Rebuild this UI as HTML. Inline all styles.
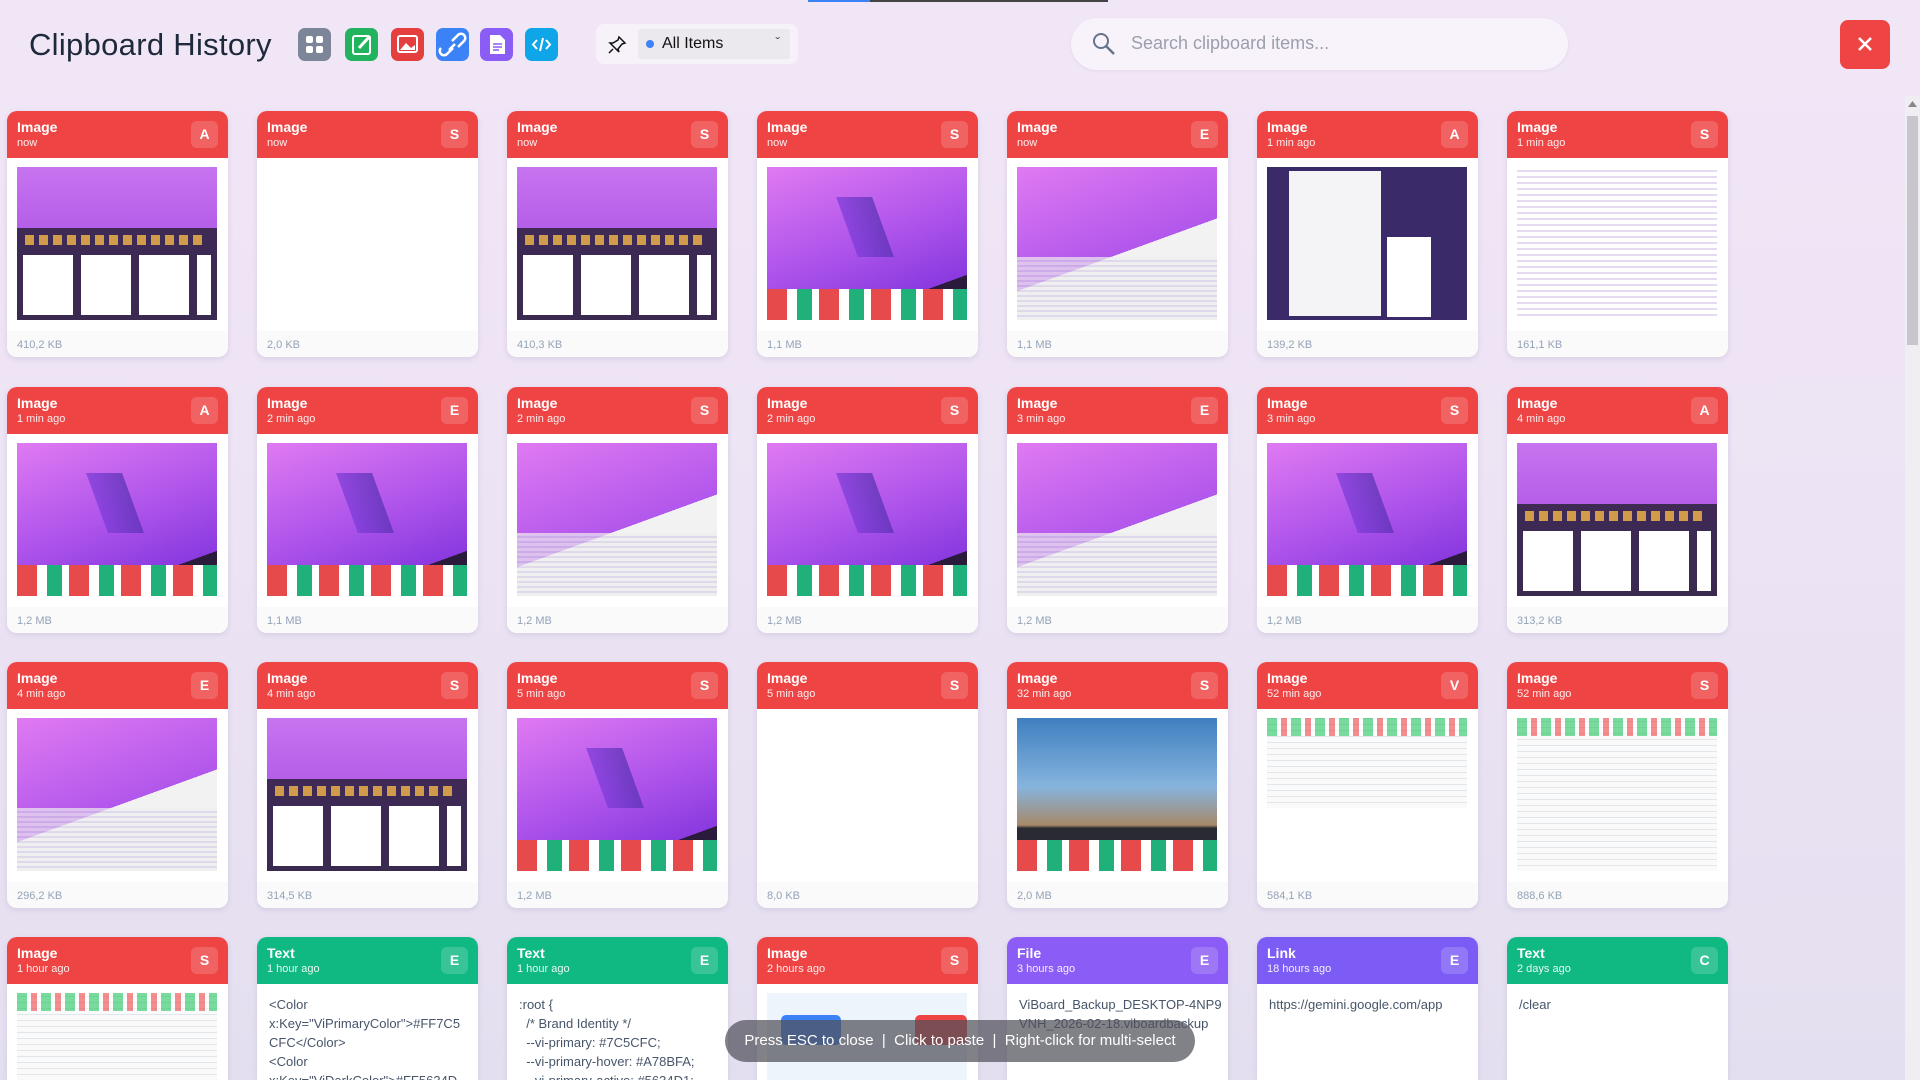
<!DOCTYPE html>
<html><head><meta charset="utf-8"><style>
*{box-sizing:border-box;margin:0;padding:0}
html,body{width:1920px;height:1080px;overflow:hidden}
body{font-family:"Liberation Sans",sans-serif;background:linear-gradient(180deg,#f1e6f6 0%,#ece3f4 50%,#e4dff0 100%);position:relative}
.title{position:absolute;left:29px;top:27px;font-size:31px;color:#1e293b;letter-spacing:0.3px}
.ic{position:absolute;top:28px;width:33px;height:33px;border-radius:7px}
.dd{position:absolute;left:596px;top:24px;width:202px;height:40px;background:#f7f1fa;border-radius:8px}
.dd .sel{position:absolute;left:42px;top:5px;width:152px;height:30px;background:#ebe8ee;border-radius:3px;font-size:16px;color:#111;line-height:30px;padding-left:24px}
.dd .sel:before{content:"";position:absolute;left:8px;top:11px;width:8px;height:8px;border-radius:50%;background:#3b82f6}
.dd .sel:after{content:"ˇ";position:absolute;right:10px;top:-2px;font-size:14px;color:#555}
.search{position:absolute;left:1071px;top:18px;width:497px;height:52px;background:#f8f3fb;border-radius:26px;box-shadow:0 1px 3px rgba(0,0,0,.06)}
.search span{position:absolute;left:60px;top:15px;font-size:18px;color:#9aa0ab}
.close{position:absolute;left:1840px;top:20px;width:50px;height:49px;background:#ef4444;border-radius:8px}
.card{position:absolute;width:221px;height:246px;background:#fff;border-radius:10px;overflow:hidden;box-shadow:0 2px 6px rgba(80,60,120,.12)}
.card.r4{height:143px;border-radius:10px 10px 0 0}
.hd{height:47px;background:#ef4444;color:#fff;position:relative;padding:8px 0 0 10px}
.hd.g{background:#10b981}.hd.p{background:#8b5cf6}.hd.l{background:#7c5cf4}
.hd b{display:block;font-size:14px}
.hd i{display:block;font-style:normal;font-size:11px;opacity:.9;margin-top:2px}
.bd{position:absolute;right:10px;top:10px;width:27px;height:27px;border-radius:6px;background:rgba(255,255,255,.17);font-size:14px;font-weight:bold;text-align:center;line-height:27px}
.ft{position:absolute;left:10px;bottom:6px;font-size:11px;color:#94a3b8}
.fb{position:absolute;left:0;right:0;bottom:0;height:26px;background:#fafafa}
.im{position:absolute;left:10px;top:56px;width:200px;height:153px;overflow:hidden}
.s1{background:linear-gradient(180deg,#c774f0 0,#b55ee8 40%,#3e2a55 40%,#3a2a50 100%)}
.s1:after{content:"";position:absolute;left:6px;top:88px;width:188px;height:60px;background:repeating-linear-gradient(90deg,#fff 0,#fff 50px,transparent 50px,transparent 58px)}
.s1:before{content:"";position:absolute;left:8px;top:68px;width:180px;height:10px;background:repeating-linear-gradient(90deg,#f5b94a 0,#f5b94a 9px,transparent 9px,transparent 14px);opacity:.8}
.v{background:linear-gradient(160deg,#e07af2 0,#b257ec 45%,#8a3ae0 80%,#2a1b3c 80%)}
.v:before{content:"";position:absolute;left:80px;top:30px;width:36px;height:60px;background:linear-gradient(90deg,#7a3ad8,#5530b0);transform:skewX(20deg);opacity:.7}
.v:after{content:"";position:absolute;left:0;top:122px;width:200px;height:31px;background:repeating-linear-gradient(90deg,#e64a4a 0,#e64a4a 20px,#fff 20px,#fff 30px,#20b07a 30px,#20b07a 45px,#fff 45px,#fff 52px)}
.vw{background:linear-gradient(160deg,#e07af2 0,#b257ec 55%,#f2f2f2 55%)}
.vw:after{content:"";position:absolute;left:0;top:90px;width:200px;height:63px;background:repeating-linear-gradient(0deg,#eee 0,#eee 3px,#d8cde8 3px,#d8cde8 5px);opacity:.7}
.mn{background:#3b2a6a}
.mn:before{content:"";position:absolute;left:22px;top:4px;width:92px;height:145px;background:#f4f4f6}
.mn:after{content:"";position:absolute;left:120px;top:70px;width:44px;height:80px;background:#fff}
.wn{background:repeating-linear-gradient(0deg,#fff 0,#fff 4px,#e6d9f2 4px,#e6d9f2 6px)}
.sc{background:repeating-linear-gradient(0deg,#fafafa 0,#fafafa 5px,#e0e6ea 5px,#e0e6ea 6px)}
.sc:before{content:"";position:absolute;left:0;top:0;width:200px;height:18px;background:repeating-linear-gradient(90deg,#22c55e 0,#22c55e 10px,#fff 10px,#fff 14px,#ef4444 14px,#ef4444 20px,#fff 20px,#fff 24px);opacity:.6}
.sky{background:linear-gradient(180deg,#3f7fc0 0,#86b4dd 45%,#a68a6a 70%,#2a2a33 72%)}
.sky:after{content:"";position:absolute;left:0;top:122px;width:200px;height:31px;background:repeating-linear-gradient(90deg,#e64a4a 0,#e64a4a 20px,#fff 20px,#fff 30px,#20b07a 30px,#20b07a 45px,#fff 45px,#fff 52px)}
.tx{position:absolute;left:12px;top:58px;right:6px;font-size:13px;line-height:19px;color:#475569;white-space:pre;overflow:hidden}
.toast{position:absolute;left:725px;top:1020px;width:470px;height:42px;border-radius:21px;background:rgba(80,80,90,.72);color:#fff;font-size:15px;text-align:center;line-height:42px}
.sb{position:absolute;left:1905px;top:96px;width:15px;height:984px;background:#f0eef2}
.sb div{position:absolute;left:2px;top:20px;width:11px;height:229px;background:#c8c6cc}
</style></head><body>
<div style="position:absolute;left:808px;top:0;width:62px;height:2px;background:#3b82f6"></div>
<div style="position:absolute;left:870px;top:0;width:238px;height:2px;background:#444"></div>
<div class="title">Clipboard History</div>
<div class="ic" style="left:298px;background:#7c8698"><svg width="33" height="33"><rect x="8" y="8" width="7" height="7" rx="2" fill="#fff"/><rect x="18" y="8" width="7" height="7" rx="2" fill="#fff"/><rect x="8" y="18" width="7" height="7" rx="2" fill="#fff"/><rect x="18" y="18" width="7" height="7" rx="2" fill="#fff"/></svg></div>
<div class="ic" style="left:345px;background:#22b35e"><svg width="33" height="33"><rect x="8" y="8" width="17" height="18" rx="2" fill="none" stroke="#fff" stroke-width="2"/><path d="M14 20 L25 8" stroke="#fff" stroke-width="3"/></svg></div>
<div class="ic" style="left:391px;background:#e53e3e"><svg width="33" height="33"><rect x="7" y="8" width="19" height="16" rx="2" fill="none" stroke="#fff" stroke-width="2"/><path d="M9 22 L15 15 L20 20 L24 17 V22Z" fill="#fff"/></svg></div>
<div class="ic" style="left:436px;background:#3b82f6"><svg width="33" height="33"><path d="M10 22 L16 16 M13 13 L19 7 A4 4 0 0 1 25 13 L19 19 M14 20 L8 26 A4 4 0 0 1 2 20" stroke="#fff" stroke-width="2.5" fill="none" transform="translate(3,0)"/></svg></div>
<div class="ic" style="left:480px;background:#8b5cf6"><svg width="33" height="33"><path d="M10 7 H20 L25 12 V26 H10Z" fill="#fff"/><path d="M13 16 H22 M13 19 H22 M13 22 H19" stroke="#8b5cf6" stroke-width="1.5"/></svg></div>
<div class="ic" style="left:525px;background:#0ea5e9"><svg width="33" height="33"><path d="M12 12 L8 16.5 L12 21 M21 12 L25 16.5 L21 21 M18 10 L15 23" stroke="#fff" stroke-width="2" fill="none"/></svg></div>
<div class="dd"><svg style="position:absolute;left:10px;top:10px" width="22" height="22"><path d="M13 3 L19 9 L16 10 L12 15 L13 18 L4 9 L7 9 L12 6Z M7 15 L3 19" stroke="#111" stroke-width="1.5" fill="none"/></svg><div class="sel">All Items</div></div>
<div class="search"><svg style="position:absolute;left:20px;top:13px" width="26" height="26"><circle cx="10" cy="10" r="7" stroke="#64748b" stroke-width="2" fill="none"/><path d="M15 15 L23 23" stroke="#64748b" stroke-width="2.5"/></svg><span>Search clipboard items...</span></div>
<div class="close"><svg width="50" height="49"><path d="M19 18 L31 30 M31 18 L19 30" stroke="#fff" stroke-width="2.5"/></svg></div>

<div class="card" style="left:7px;top:111px"><div class="hd"><b>Image</b><i>now</i><span class="bd">A</span></div><div class="im s1"></div><div class="fb"></div><div class="ft">410,2 KB</div></div>
<div class="card" style="left:257px;top:111px"><div class="hd"><b>Image</b><i>now</i><span class="bd">S</span></div><div class="fb"></div><div class="ft">2,0 KB</div></div>
<div class="card" style="left:507px;top:111px"><div class="hd"><b>Image</b><i>now</i><span class="bd">S</span></div><div class="im s1"></div><div class="fb"></div><div class="ft">410,3 KB</div></div>
<div class="card" style="left:757px;top:111px"><div class="hd"><b>Image</b><i>now</i><span class="bd">S</span></div><div class="im v"></div><div class="fb"></div><div class="ft">1,1 MB</div></div>
<div class="card" style="left:1007px;top:111px"><div class="hd"><b>Image</b><i>now</i><span class="bd">E</span></div><div class="im vw"></div><div class="fb"></div><div class="ft">1,1 MB</div></div>
<div class="card" style="left:1257px;top:111px"><div class="hd"><b>Image</b><i>1 min ago</i><span class="bd">A</span></div><div class="im mn"></div><div class="fb"></div><div class="ft">139,2 KB</div></div>
<div class="card" style="left:1507px;top:111px"><div class="hd"><b>Image</b><i>1 min ago</i><span class="bd">S</span></div><div class="im wn"></div><div class="fb"></div><div class="ft">161,1 KB</div></div>

<div class="card" style="left:7px;top:387px"><div class="hd"><b>Image</b><i>1 min ago</i><span class="bd">A</span></div><div class="im v"></div><div class="fb"></div><div class="ft">1,2 MB</div></div>
<div class="card" style="left:257px;top:387px"><div class="hd"><b>Image</b><i>2 min ago</i><span class="bd">E</span></div><div class="im v"></div><div class="fb"></div><div class="ft">1,1 MB</div></div>
<div class="card" style="left:507px;top:387px"><div class="hd"><b>Image</b><i>2 min ago</i><span class="bd">S</span></div><div class="im vw"></div><div class="fb"></div><div class="ft">1,2 MB</div></div>
<div class="card" style="left:757px;top:387px"><div class="hd"><b>Image</b><i>2 min ago</i><span class="bd">S</span></div><div class="im v"></div><div class="fb"></div><div class="ft">1,2 MB</div></div>
<div class="card" style="left:1007px;top:387px"><div class="hd"><b>Image</b><i>3 min ago</i><span class="bd">E</span></div><div class="im vw"></div><div class="fb"></div><div class="ft">1,2 MB</div></div>
<div class="card" style="left:1257px;top:387px"><div class="hd"><b>Image</b><i>3 min ago</i><span class="bd">S</span></div><div class="im v"></div><div class="fb"></div><div class="ft">1,2 MB</div></div>
<div class="card" style="left:1507px;top:387px"><div class="hd"><b>Image</b><i>4 min ago</i><span class="bd">A</span></div><div class="im s1"></div><div class="fb"></div><div class="ft">313,2 KB</div></div>

<div class="card" style="left:7px;top:662px"><div class="hd"><b>Image</b><i>4 min ago</i><span class="bd">E</span></div><div class="im vw"></div><div class="fb"></div><div class="ft">296,2 KB</div></div>
<div class="card" style="left:257px;top:662px"><div class="hd"><b>Image</b><i>4 min ago</i><span class="bd">S</span></div><div class="im s1"></div><div class="fb"></div><div class="ft">314,5 KB</div></div>
<div class="card" style="left:507px;top:662px"><div class="hd"><b>Image</b><i>5 min ago</i><span class="bd">S</span></div><div class="im v"></div><div class="fb"></div><div class="ft">1,2 MB</div></div>
<div class="card" style="left:757px;top:662px"><div class="hd"><b>Image</b><i>5 min ago</i><span class="bd">S</span></div><div class="fb"></div><div class="ft">8,0 KB</div></div>
<div class="card" style="left:1007px;top:662px"><div class="hd"><b>Image</b><i>32 min ago</i><span class="bd">S</span></div><div class="im sky"></div><div class="fb"></div><div class="ft">2,0 MB</div></div>
<div class="card" style="left:1257px;top:662px"><div class="hd"><b>Image</b><i>52 min ago</i><span class="bd">V</span></div><div class="im sc" style="height:90px"></div><div class="fb"></div><div class="ft">584,1 KB</div></div>
<div class="card" style="left:1507px;top:662px"><div class="hd"><b>Image</b><i>52 min ago</i><span class="bd">S</span></div><div class="im sc"></div><div class="fb"></div><div class="ft">888,6 KB</div></div>

<div class="card r4" style="left:7px;top:937px"><div class="hd"><b>Image</b><i>1 hour ago</i><span class="bd">S</span></div><div class="im sc"></div></div>
<div class="card r4" style="left:257px;top:937px"><div class="hd g"><b>Text</b><i>1 hour ago</i><span class="bd">E</span></div><div class="tx">&lt;Color
x:Key="ViPrimaryColor"&gt;#FF7C5
CFC&lt;/Color&gt;
&lt;Color
x:Key="ViDarkColor"&gt;#FF5634D</div></div>
<div class="card r4" style="left:507px;top:937px"><div class="hd g"><b>Text</b><i>1 hour ago</i><span class="bd">E</span></div><div class="tx">:root {
  /* Brand Identity */
  --vi-primary: #7C5CFC;
  --vi-primary-hover: #A78BFA;
  --vi-primary-active: #5634D1;</div></div>
<div class="card r4" style="left:757px;top:937px"><div class="hd"><b>Image</b><i>2 hours ago</i><span class="bd">S</span></div><div class="im" style="background:#eef4fb"><div style="position:absolute;left:14px;top:22px;width:60px;height:30px;background:#3b82f6;border-radius:5px"></div><div style="position:absolute;left:148px;top:22px;width:52px;height:30px;background:#ef4444;border-radius:5px"></div></div></div>
<div class="card r4" style="left:1007px;top:937px"><div class="hd p"><b>File</b><i>3 hours ago</i><span class="bd">E</span></div><div class="tx">ViBoard_Backup_DESKTOP-4NP9
VNH_2026-02-18.viboardbackup</div></div>
<div class="card r4" style="left:1257px;top:937px"><div class="hd l"><b>Link</b><i>18 hours ago</i><span class="bd">E</span></div><div class="tx">https://gemini.google.com/app</div></div>
<div class="card r4" style="left:1507px;top:937px"><div class="hd g"><b>Text</b><i>2 days ago</i><span class="bd">C</span></div><div class="tx">/clear</div></div>

<div class="toast">Press ESC to close &nbsp;|&nbsp; Click to paste &nbsp;|&nbsp; Right-click for multi-select</div>
<div class="sb"><div></div><svg style="position:absolute;left:3px;top:5px" width="9" height="6"><path d="M0 6 L4.5 0 L9 6Z" fill="#888"/></svg></div>
</body></html>
